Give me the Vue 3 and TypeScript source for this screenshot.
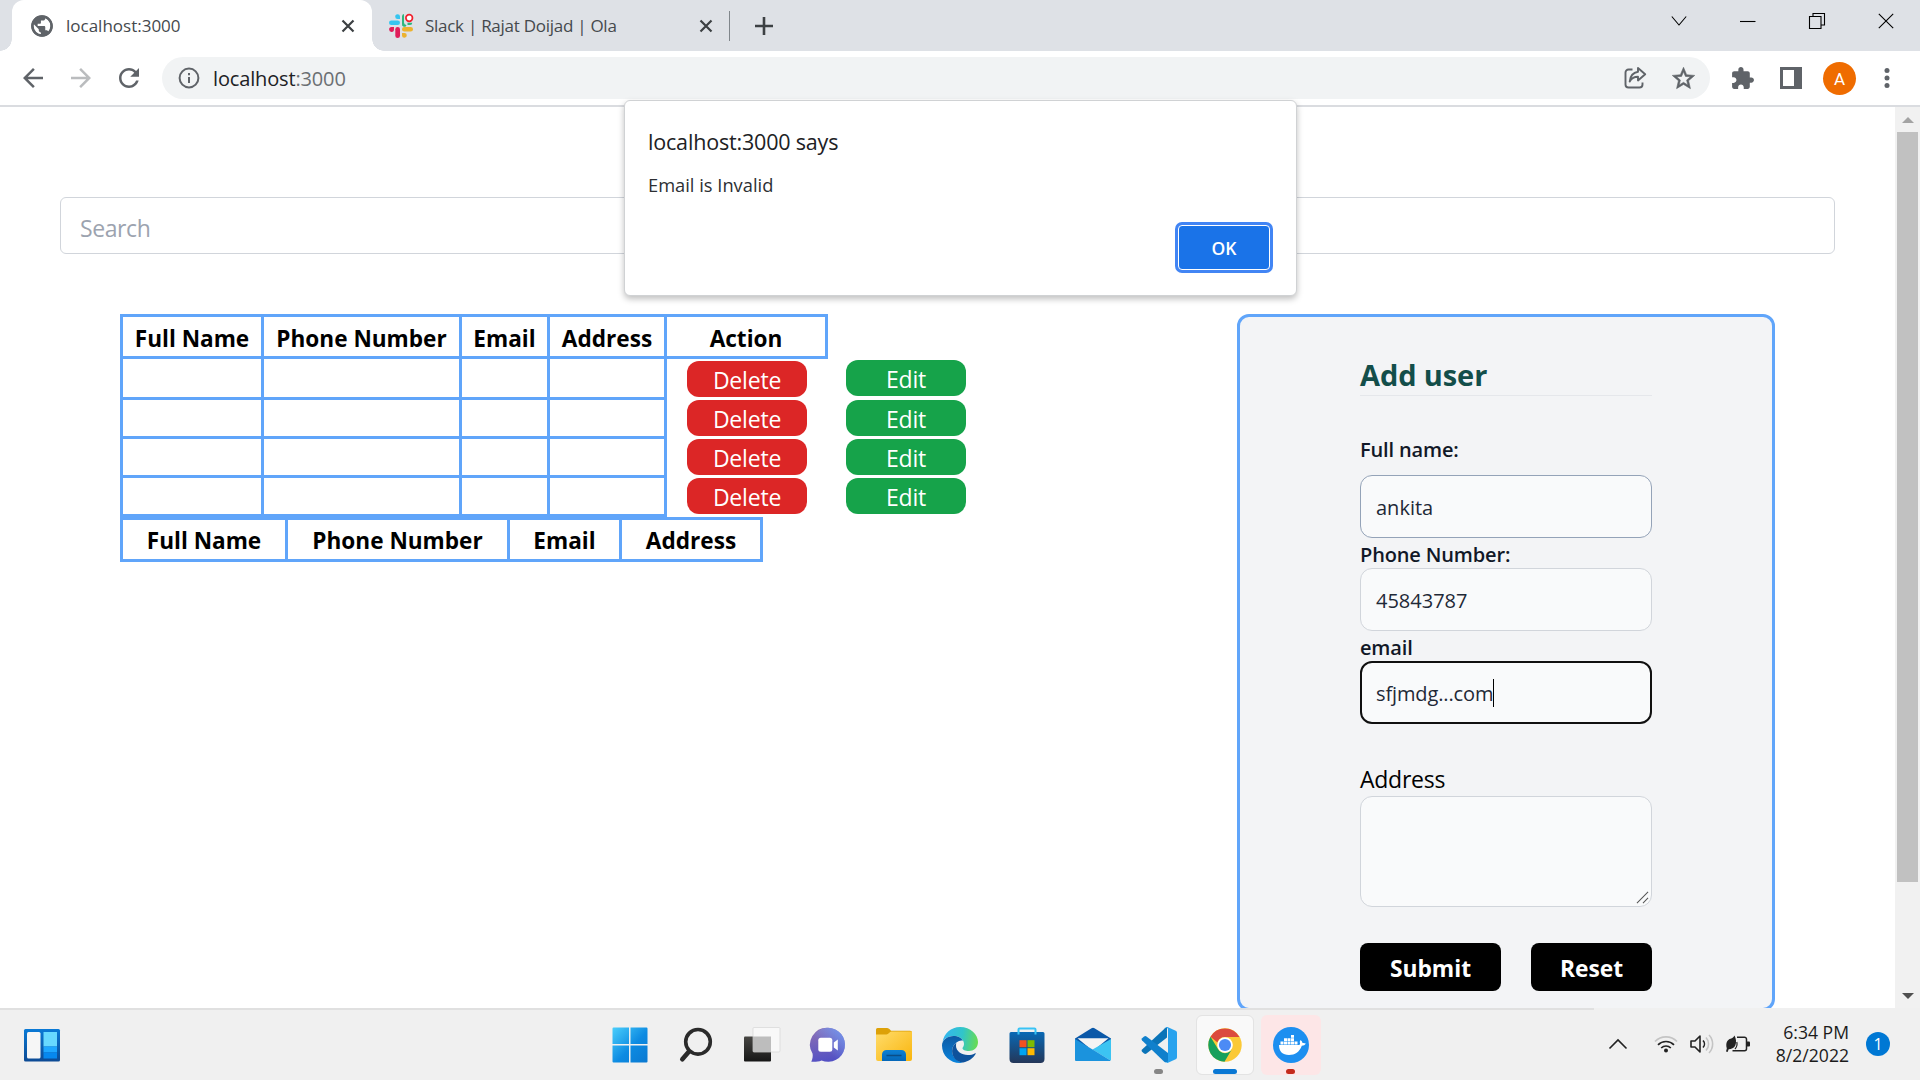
<script setup lang="ts">
interface Column {
  label: string
  width: number
}

const userColumns: Column[] = [
  { label: 'Full Name', width: 144 },
  { label: 'Phone Number', width: 198 },
  { label: 'Email', width: 88 },
  { label: 'Address', width: 117 },
  { label: 'Action', width: 161 },
]

const resultColumns: Column[] = [
  { label: 'Full Name', width: 168 },
  { label: 'Phone Number', width: 222 },
  { label: 'Email', width: 112 },
  { label: 'Address', width: 141 },
]

const users: number[] = [1, 2, 3, 4]
</script>

<template>
  <div class="screen">
    <header class="tabs">
      <div class="tab active">
        <svg class="globe" viewBox="0 0 24 24"><circle cx="12" cy="12" r="8.800" fill="none" stroke="#5f6368" stroke-width="2.200"/><path fill="#5f6368" d="M12 2C6.480 2 2 6.480 2 12s4.480 10 10 10 10-4.480 10-10S17.520 2 12 2zm-1 17.930c-3.950-.490-7-3.850-7-7.930 0-.620.080-1.210.210-1.790L9 15v1c0 1.100.900 2 2 2v1.930zm6.900-2.540c-.260-.810-1-1.390-1.900-1.390h-1v-3c0-.550-.450-1-1-1H8v-2h2c.550 0 1-.450 1-1V7h2c1.100 0 2-.900 2-2v-.410c2.930 1.190 5 4.060 5 7.410 0 2.080-.800 3.970-2.100 5.390z"/></svg>
        <span class="tab-title t1">localhost:3000</span>
        <svg class="x" viewBox="0 0 14 14"><path d="M1.500 1.500l11 11M12.500 1.500l-11 11" stroke="#3c4043" stroke-width="2.200"/></svg>
      </div>
      <div class="tab second">
        <svg class="slack" viewBox="0 0 24 24">
          <g fill="#36c5f0"><path d="M11 5H8.800A2.400 2.400 0 1 1 11 2.600z"/><rect x="0" y="6.500" width="11" height="4.600" rx="2.300"/></g>
          <path d="M13 2.500A2.400 2.400 0 0 1 15 0v8.500a2.400 2.400 0 0 0 2.500 2.400 2.300 2.300 0 0 1-4.500-1z" fill="#2eb67d"/>
          <path d="M18.500 8.800h4.800a2.300 2.300 0 0 1-2.300 2.300h-2.500z" fill="#2eb67d"/>
          <g fill="#ecb22e"><rect x="13" y="13" width="11" height="4.600" rx="2.300"/><path d="M13 19h2.300a2.400 2.400 0 1 1-2.300 2.400z"/></g>
          <g fill="#e01e5a"><rect x="6.300" y="13" width="4.700" height="11" rx="2.350"/><path d="M5 13v2.300A2.450 2.450 0 1 1 2.500 13z"/></g>
          <circle cx="20.200" cy="4" r="3.300" fill="#fff" stroke="#f0202d" stroke-width="1.700"/>
        </svg>
        <span class="tab-title t2">Slack | Rajat Doijad | Ola</span>
        <svg class="x" viewBox="0 0 14 14"><path d="M1.500 1.500l11 11M12.500 1.500l-11 11" stroke="#3c4043" stroke-width="2.200"/></svg>
      </div>
      <i class="divider"></i>
      <svg class="plus" viewBox="0 0 20 20"><path d="M10 1v18M1 10h18" stroke="#3c4043" stroke-width="2.600"/></svg>
      <div class="window-buttons">
        <svg viewBox="0 0 16 16"><path d="M.8 3.500L8 12l7.200-8.500"/></svg>
        <svg viewBox="0 0 16 16"><path d="M0 8.500h15.500"/></svg>
        <svg viewBox="0 0 16 16"><path d="M.5 3.500h11.500v12H.5zM4 3.500V.5h11.500v11.500h-3.500"/></svg>
        <svg viewBox="0 0 16 16"><path d="M.8.800l14.400 14.400M15.200.800L.8 15.200"/></svg>
      </div>
    </header>

    <nav class="toolbar">
      <svg class="nav-icon back" viewBox="0 0 24 24"><path d="M20 11H7.830l5.590-5.590L12 4l-8 8 8 8 1.410-1.410L7.830 13H20v-2z"/></svg>
      <svg class="nav-icon forward" viewBox="0 0 24 24"><path d="M12 4l-1.410 1.410L16.170 11H4v2h12.170l-5.580 5.590L12 20l8-8z"/></svg>
      <svg class="nav-icon reload" viewBox="0 0 24 24"><path d="M17.650 6.350C16.200 4.900 14.210 4 12 4c-4.420 0-7.990 3.580-7.990 8s3.570 8 7.990 8c3.730 0 6.840-2.550 7.730-6h-2.080c-.820 2.330-3.040 4-5.650 4-3.310 0-6-2.690-6-6s2.690-6 6-6c1.660 0 3.140.690 4.220 1.780L13 11h7V4l-2.350 2.350z"/></svg>
      <div class="omnibox">
        <svg class="info" viewBox="0 0 22 22"><circle cx="11" cy="11" r="9.400" fill="none" stroke="#5f6368" stroke-width="2"/><path d="M11 10v6M11 6v2.200" stroke="#5f6368" stroke-width="2"/></svg>
        <span class="url">localhost<em>:3000</em></span>
        <svg class="share" viewBox="0 0 24 24" fill="none" stroke="#5f6368" stroke-width="1.900" stroke-linejoin="round"><path d="M9.500 3.500H5.500A3 3 0 0 0 2.500 6.500v12a3 3 0 0 0 3 3h11a3 3 0 0 0 3-3v-2"/><path d="M15 2l7.200 6.300L15 14.500v-3.700c-4 0-6.500 1.500-8.300 4.700.500-5 3-9 8.300-9.800z"/></svg>
        <svg class="star" viewBox="0 0 24 24"><path fill="#5f6368" stroke="#5f6368" stroke-width=".5" d="M22 9.240l-7.190-.620L12 2 9.190 8.630 2 9.240l5.460 4.730L5.820 21 12 17.270 18.180 21l-1.630-7.030L22 9.240zM12 15.400l-3.760 2.270 1-4.280-3.320-2.880 4.380-.380L12 6.100l1.710 4.040 4.380.380-3.320 2.880 1 4.280L12 15.400z"/></svg>
      </div>
      <svg class="puzzle" viewBox="0 0 24 24"><path fill="#5f6368" d="M20.500 11H19V7c0-1.100-.900-2-2-2h-4V3.500C13 2.120 11.880 1 10.500 1S8 2.120 8 3.500V5H4c-1.100 0-1.990.900-1.990 2v3.800H3.500c1.490 0 2.700 1.210 2.700 2.700s-1.210 2.700-2.700 2.700H2V20c0 1.100.900 2 2 2h3.800v-1.500c0-1.490 1.210-2.700 2.700-2.700 1.490 0 2.700 1.210 2.700 2.700V22H17c1.100 0 2-.900 2-2v-4h1.500c1.380 0 2.500-1.120 2.500-2.500S21.880 11 20.500 11z"/></svg>
      <svg class="panel-icon" viewBox="0 0 22 22"><path fill="#5f6368" fill-rule="evenodd" d="M0 0h22v22H0zM3 3v16h11V3z"/></svg>
      <span class="avatar">A</span>
      <svg class="dots" viewBox="0 0 6 22" fill="#5f6368"><circle cx="3" cy="3.500" r="2.500"/><circle cx="3" cy="11" r="2.500"/><circle cx="3" cy="18.500" r="2.500"/></svg>
    </nav>

    <section class="viewport">
      <main class="page">
        <div class="search">Search</div>
        <div class="content">
          <div class="tables">
            <div class="row head users">
              <div v-for="c in userColumns" :key="c.label" class="cell" :style="{ width: c.width + 'px' }">{{ c.label }}</div>
            </div>
            <div v-for="u in users" :key="u" class="row body">
              <div v-for="c in userColumns.slice(0, 4)" :key="c.label" class="cell" :style="{ width: c.width + 'px' }"></div>
              <button class="pill delete">Delete</button>
              <button class="pill edit">Edit</button>
            </div>
            <div class="row head">
              <div v-for="c in resultColumns" :key="c.label" class="cell" :style="{ width: c.width + 'px' }">{{ c.label }}</div>
            </div>
          </div>

          <form class="form" @submit.prevent>
            <h2>Add user</h2>
            <label class="first">Full name:</label>
            <div class="field filled"><span>ankita</span></div>
            <label>Phone Number:</label>
            <div class="field"><span>45843787</span></div>
            <label>email</label>
            <div class="field focus"><span class="email-text">sfjmdg...com</span><i class="caret"></i></div>
            <div class="address">Address</div>
            <div class="area">
              <svg viewBox="0 0 14 14"><path d="M1 13L13 1M7.500 13L13 7.500" stroke="#555" stroke-width="1.100"/></svg>
            </div>
            <div class="actions">
              <button class="submit">Submit</button>
              <button class="reset">Reset</button>
            </div>
          </form>
        </div>
      </main>
      <aside class="scrollbar">
        <i class="up"></i>
        <i class="thumb"></i>
        <i class="down"></i>
      </aside>
    </section>

    <footer class="taskbar">
      <svg class="widgets" viewBox="0 0 36 33">
        <defs><linearGradient id="wg" x1="0" y1="0" x2="0" y2="1"><stop offset="0" stop-color="#0a7ad6"/><stop offset="1" stop-color="#0d4a94"/></linearGradient></defs>
        <rect width="36" height="32.500" rx="1.500" fill="url(#wg)"/>
        <rect x="3" y="3" width="13.500" height="26.500" rx="1.500" fill="#f6f6f6"/>
        <path d="M19.500 3H33v14.500H19.500z" fill="#68d9ff"/><path d="M19.500 17.500H33v6H19.500z" fill="#1ea7ff"/><path d="M19.500 23.500H33v6H19.500z" fill="#0688ef"/>
      </svg>

      <div class="apps">
        <div class="app">
          <svg viewBox="0 0 36 36">
            <defs><linearGradient id="win" gradientUnits="userSpaceOnUse" x1="0" y1="0" x2="36" y2="36"><stop offset="0" stop-color="#4cd0fc"/><stop offset=".55" stop-color="#0d8be2"/><stop offset="1" stop-color="#0a78d0"/></linearGradient></defs>
            <path fill="url(#win)" d="M.5 1.500a1 1 0 0 1 1-1H17v16.500H.5zM18.500.500h16a1 1 0 0 1 1 1V17h-17zM.500 18.500H17v17H1.500a1 1 0 0 1-1-1zM18.500 18.500h17v16a1 1 0 0 1-1 1h-16z"/>
          </svg>
        </div>
        <div class="app">
          <svg viewBox="0 0 36 36"><circle cx="20" cy="14.800" r="12.300" fill="none" stroke="#2b2b2b" stroke-width="3.600"/><path d="M11 24.500L4.300 32.300" stroke="#2b2b2b" stroke-width="4.600" stroke-linecap="round"/></svg>
        </div>
        <div class="app">
          <svg viewBox="0 0 36 36">
            <defs><linearGradient id="tv" x1="0" y1="0" x2="0" y2="1"><stop offset="0" stop-color="#474643"/><stop offset="1" stop-color="#171717"/></linearGradient></defs>
            <rect y="9.500" width="27" height="25" rx="1" fill="url(#tv)"/><rect x="9" y=".5" width="27" height="24.500" rx="1" fill="#f8f8f8" stroke="#d6d6d6" stroke-width=".7"/><path d="M9 9.500h18V25H9z" fill="#bdbdbd"/>
          </svg>
        </div>
        <div class="app">
          <svg viewBox="0 0 36 36">
            <defs><linearGradient id="ch" x1=".3" y1="0" x2=".5" y2="1"><stop offset="0" stop-color="#8c6fb4"/><stop offset="1" stop-color="#5250c4"/></linearGradient><linearGradient id="ch2" x1="1" y1="0" x2=".4" y2=".6"><stop offset="0" stop-color="#6f9bf5"/><stop offset="1" stop-color="#6f9bf5" stop-opacity="0"/></linearGradient></defs>
            <path fill="url(#ch)" d="M18 .8a17 17 0 1 1-6.500 32.700c-3 1.300-6.500 1.500-10.200 1.300 1.200-2.500 1.700-5.300 1.300-8A17 17 0 0 1 18 .8z"/>
            <path fill="url(#ch2)" d="M18 .8a17 17 0 1 1-6.500 32.700A17 17 0 0 1 18 .8z"/>
            <rect x="8.300" y="10.800" width="14" height="14" rx="2.500" fill="#fff"/><path fill="#fff" d="M23.800 15.500l4-3v11l-4-3z"/>
          </svg>
        </div>
        <div class="app">
          <svg viewBox="0 0 36 36">
            <defs><linearGradient id="fo" x1="0" y1="0" x2="1" y2="1"><stop offset="0" stop-color="#ffdc6b"/><stop offset="1" stop-color="#f9b50d"/></linearGradient><linearGradient id="fb" x1="0" y1="0" x2="0" y2="1"><stop offset="0" stop-color="#0d80d4"/><stop offset="1" stop-color="#0567b8"/></linearGradient></defs>
            <path d="M0 2.500A1.500 1.500 0 0 1 1.500 1H11c1.500 0 2.500 1 4 2.800h19A2 2 0 0 1 36 6v6H0z" fill="#dda108"/><path d="M0 7.500h10.500c2 0 3-3 5-3H36V32a2 2 0 0 1-2 2H2a2 2 0 0 1-2-2z" fill="url(#fo)"/>
            <path d="M6 34V27.500a4.500 4.500 0 0 1 4.500-4.500h15a4.500 4.500 0 0 1 4.500 4.500V34z" fill="url(#fb)"/><path d="M10.500 28.500h15" stroke="#0b4d86" stroke-width="1.500"/>
          </svg>
        </div>
        <div class="app">
          <svg viewBox="0 0 36 36">
            <defs><linearGradient id="e1" x1="0" y1=".4" x2="1" y2=".5"><stop offset="0" stop-color="#34b5f0"/><stop offset=".55" stop-color="#31c5c9"/><stop offset="1" stop-color="#68dc52"/></linearGradient><linearGradient id="e2" x1="0" y1="0" x2="0" y2="1"><stop offset="0" stop-color="#0c59a4"/><stop offset="1" stop-color="#0a84dc"/></linearGradient></defs>
            <path fill="url(#e1)" d="M.5 15C2 6.500 9 0 18 0c10.500 0 18 7.500 18 15 0 6-4.500 9-9 9-4 0-6.500-1.200-6.500-2.800 0-1 1.500-1.600 1.500-4.200 0-4.500-4.500-8-10.500-8C6.500 9 2.500 11.500.5 15z"/>
            <path fill="url(#e2)" d="M11.500 9C5.500 9 0 13 0 18.500 0 28.500 8 36 18 36c1 0 2-.2 3-.4-6-1.100-10.800-5.600-10.800-11.600 0-5 3.300-8.200 6.800-10 1.500-.6 3-.7 4 0C19.500 10.500 16 9 11.500 9z"/>
            <path fill="#0e529c" d="M14.300 15.800c-2.500 2-4.200 4.700-4.200 8.200 0 6.500 5 11.500 11 11.500 5.500-1 10-4.300 12.500-8.500.5-.8-.2-1-.9-.6-2 1-4 1.600-7 1.600-6 0-11.700-4-11.700-9 0-1.200.1-2.200.3-3.200z"/>
          </svg>
        </div>
        <div class="app">
          <svg viewBox="0 0 36 36">
            <defs><linearGradient id="st" x1="0" y1="0" x2="0" y2="1"><stop offset="0" stop-color="#0969b5"/><stop offset="1" stop-color="#243759"/></linearGradient></defs>
            <path d="M.5 6.500a1.500 1.500 0 0 1 1.500-1.500h32a1.500 1.500 0 0 1 1.500 1.500V32a4 4 0 0 1-4 4h-27a4 4 0 0 1-4-4z" fill="url(#st)"/><path d="M9.500 7.500v-5a1 1 0 0 1 1-1h15a1 1 0 0 1 1 1v5" fill="none" stroke="#38c3f5" stroke-width="2"/>
            <path fill="#f25022" d="M10.500 13.200h7v7h-7z"/><path fill="#7fba00" d="M18.500 13.200h7v7h-7z"/><path fill="#00a4ef" d="M10.500 21.200h7v7h-7z"/><path fill="#ffb900" d="M18.500 21.200h7v7h-7z"/>
          </svg>
        </div>
        <div class="app">
          <svg viewBox="0 0 36 36">
            <path fill="#0a58a8" d="M0 11.500L16.500 1.200a3 3 0 0 1 3 0L36 11.500V20H0z"/><path fill="#f4f4f4" d="M2.500 11.200h31L18 24z"/><path fill="#3cc4f2" d="M36 12v20.500a1 1 0 0 1-.5 1L17.500 22.500z"/><path fill="#1b93dd" d="M0 12l18 10.800L35.500 33.500 35 34H1a1 1 0 0 1-1-1z"/>
          </svg>
        </div>
        <div class="app">
          <svg viewBox="0 0 36 36">
            <path fill="#0b74b8" d="M26 0v10.500L5.500 26.500a2 2 0 0 1-2.400 0l-2-1.700a1.600 1.600 0 0 1 0-2.300L24 1.200z"/><path fill="#1080cc" d="M27 35V26L5.500 9.500a2 2 0 0 0-2.400 0l-2 1.700a1.600 1.600 0 0 0 0 2.300L23.500 34.900z"/><path fill="#29a3ee" d="M26.500 0L34.700 3.800A2 2 0 0 1 36 5.700v24.600a2 2 0 0 1-1.300 1.900L26.500 36c-1.200.3-2.300 0-3-.8 1.300.8 3.500.3 3.500-1.700v-31c0-2-2-2.500-3.500-1.700.7-.8 1.800-1.100 3-.8z"/>
          </svg>
          <i class="mark gray"></i>
        </div>
        <div class="app tile white">
          <svg viewBox="0 0 36 36">
            <circle cx="18" cy="18" r="16.700" fill="#fbc936"/>
            <path fill="#db4a3e" d="M3.500 9.700A16.700 16.700 0 0 1 32.500 10H18a8 8 0 0 0-7.500 5.500z"/><path fill="#17a05d" d="M3.500 9.700A16.700 16.700 0 0 0 17.500 34.700L25 22a8 8 0 0 1-14 0z"/>
            <circle cx="18" cy="18" r="7.800" fill="#fff"/><circle cx="18" cy="18" r="6.100" fill="#4c8bf5"/>
          </svg>
          <i class="mark blue"></i>
        </div>
        <div class="app tile pink">
          <svg viewBox="0 0 36 36">
            <circle cx="18" cy="18" r="18" fill="#1d8ff0"/>
            <path fill="#fff" d="M6 18h20c1.200 0 1.300-1.500.7-3l.8-2c1.200.8 1.800 1.800 2 3 1.300-.2 2.400 0 3.300.6-.8 1.500-2.200 2.200-4 2.200C26.500 25 22 28 16 28 9.500 28 6 24.500 6 18z"/>
            <path fill="#fff" d="M7.500 14.500h3v3h-3zM11 14.500h3v3h-3zM14.500 14.500h3v3h-3zM18 14.500h3v3h-3zM21.500 14.500h3v3h-3zM11 11.200h3v2.900h-3zM14.500 11.200h3v2.900h-3zM18 11.200h3v2.900h-3zM18 8h3v2.800h-3z"/>
          </svg>
          <i class="mark red"></i>
        </div>
      </div>

      <div class="tray">
        <svg class="chev" viewBox="0 0 20 12"><path d="M1.500 10.500L10 2l8.500 8.500" fill="none" stroke="#222" stroke-width="1.600"/></svg>
        <svg class="wifi" viewBox="0 0 24 18" fill="none" stroke-width="1.700"><path d="M1 6.500a15.500 15.500 0 0 1 22 0" stroke="#c4c4c4"/><path d="M4 9.800a11.300 11.300 0 0 1 16 0M7.200 13a6.800 6.800 0 0 1 9.600 0" stroke="#222"/><circle cx="12" cy="15.500" r="2" fill="#222"/></svg>
        <svg class="sound" viewBox="0 0 24 20" fill="none" stroke-width="1.600"><path d="M1 7h4l5-5v16l-5-5H1z" stroke="#222" stroke-linejoin="round"/><path d="M13 6.500a5 5 0 0 1 0 7" stroke="#222"/><path d="M16 3.500a9.500 9.500 0 0 1 0 13M19 1a13 13 0 0 1 0 18" stroke="#c4c4c4"/></svg>
        <svg class="battery" viewBox="0 0 24 18"><path d="M11 2.200h7.500a2 2 0 0 1 2 2v9.600a2 2 0 0 1-2 2H6.500" fill="none" stroke="#222" stroke-width="1.500"/><path d="M21 6.500h2a1 1 0 0 1 1 1v3a1 1 0 0 1-1 1h-2z" fill="#222"/><path d="M8.500.5c1.600 3 2.200 7 .8 10-1.200 2.700-4 3.500-6.600 3.700L1.600 17 0 16.500l.8-3C-.8 7 2 4.500 4.500 3.800 6.500 3.200 7.800 2 8.500.5z" fill="#222"/><path d="M10.800 7c.6 2.500 0 5-1.800 7" fill="none" stroke="#222" stroke-width="1.200"/></svg>
        <div class="clock"><span>6:34 PM</span><span>8/2/2022</span></div>
        <span class="badge">1</span>
      </div>
    </footer>

    <div class="dialog">
      <p class="origin">localhost:3000 says</p>
      <p class="message">Email is Invalid</p>
      <button class="ok">OK</button>
    </div>
  </div>
</template>

<style>
body {
  margin: 0;
  overflow: hidden;
}
</style>

<style scoped>
.screen {
  position: relative;
  width: 1920px;
  height: 1080px;
  display: flex;
  flex-direction: column;
  overflow: hidden;
  background: #fff;
  color: #000;
  font-family: "Segoe UI", "Open Sans", "Noto Sans", sans-serif;
}
.screen *,
.screen *::before,
.screen *::after {
  box-sizing: border-box;
}
svg {
  display: block;
  flex: none;
  overflow: visible;
}
button {
  border: 0;
  padding: 0;
  font-family: inherit;
}

/* tab strip */
.tabs {
  height: 51px;
  flex: none;
  display: flex;
  align-items: center;
  background: #dee1e6;
  padding: 0 26px 0 12px;
}
.tab {
  position: relative;
  height: 51px;
  width: 360px;
  display: flex;
  align-items: center;
  padding: 0 17px;
}
.tab.second {
  width: 358px;
}
.tab.active {
  background: #fff;
  border-radius: 12px 12px 0 0;
}
.tab.active::before,
.tab.active::after {
  content: "";
  position: absolute;
  bottom: 0;
  width: 12px;
  height: 12px;
}
.tab.active::before {
  left: -12px;
  background: radial-gradient(circle at 0 0, transparent 11.5px, #fff 12px);
}
.tab.active::after {
  right: -12px;
  background: radial-gradient(circle at 100% 0, transparent 11.5px, #fff 12px);
}
.globe {
  width: 26px;
  height: 26px;
}
.slack {
  width: 24px;
  height: 24px;
}
.tab-title {
  margin-left: 11px;
  font-size: 17px;
  line-height: 26px;
  color: #45494d;
  flex: 1;
  white-space: nowrap;
}
.t2 {
  margin-left: 12px;
  letter-spacing: -0.27px;
}
.x {
  width: 14px;
  height: 14px;
}
.divider {
  width: 1px;
  height: 30px;
  background: #80868b;
  margin-left: -1px;
}
.plus {
  width: 20px;
  height: 20px;
  margin-left: 24px;
}
.window-buttons {
  margin-left: auto;
  display: flex;
  gap: 53px;
  margin-top: -9px;
}
.window-buttons svg {
  width: 16px;
  height: 16px;
  fill: none;
  stroke: #000;
  stroke-width: 1.1;
}

/* toolbar */
.toolbar {
  height: 56px;
  flex: none;
  display: flex;
  align-items: center;
  border-bottom: 2px solid #dadce0;
  padding-left: 18px;
}
.nav-icon {
  width: 30px;
  height: 30px;
  fill: #5f6368;
}
.forward {
  margin-left: 18px;
  fill: #babcbe;
}
.reload {
  margin-left: 18px;
}
.omnibox {
  width: 1548px;
  height: 42px;
  margin-left: 18px;
  border-radius: 21px;
  background: #f1f3f4;
  display: flex;
  align-items: center;
  padding: 0 13px 0 16px;
}
.info {
  width: 22px;
  height: 22px;
}
.url {
  flex: 1;
  margin: 2px 0 0 13px;
  font-size: 20px;
  line-height: 28px;
  letter-spacing: -0.15px;
  color: #202124;
}
.url em {
  font-style: normal;
  color: #6b6f73;
}
.share {
  width: 24px;
  height: 24px;
}
.star {
  width: 27px;
  height: 27px;
  margin-left: 23px;
}
.puzzle {
  width: 25px;
  height: 25px;
  margin-left: 20px;
}
.panel-icon {
  width: 22px;
  height: 22px;
  margin-left: 25px;
}
.avatar {
  width: 33px;
  height: 33px;
  margin-left: 21px;
  border-radius: 50%;
  background: #ef6c00;
  color: #fff;
  font: 17px/34px Roboto, sans-serif;
  text-align: center;
}
.dots {
  width: 6px;
  height: 22px;
  margin-left: 28px;
}

/* page */
.viewport {
  height: 901px;
  flex: none;
  display: flex;
  overflow: hidden;
}
.page {
  width: 1895px;
  padding: 90px 60px 0;
}
.search {
  height: 57px;
  border: 1px solid #d1d5db;
  border-radius: 6px;
  padding: 3px 19px 0;
  font-size: 23px;
  line-height: 55px;
  letter-spacing: -0.4px;
  color: #9ca3af;
}
.content {
  margin: 60px 0 0;
  padding: 0 60px;
  display: flex;
  justify-content: space-between;
  align-items: flex-start;
}
.tables {
  display: flex;
  flex-direction: column;
}
.row {
  display: flex;
  height: 39px;
}
.cell {
  flex: none;
  border: solid #60a5fa;
  border-width: 0 3px 3px 0;
}
.cell:first-child {
  border-left-width: 3px;
}
.head {
  height: 45px;
}
.head .cell {
  border-top-width: 3px;
  font-size: 22.6px;
  font-weight: 700;
  line-height: 41px;
  text-align: center;
  white-space: nowrap;
}
.head.users .cell {
  line-height: 43px;
}
.head + .body {
  height: 41px;
}
.pill {
  width: 120px;
  height: 36px;
  border-radius: 12px;
  align-self: flex-end;
  margin-bottom: 3px;
  color: #fff;
  font-size: 23px;
  letter-spacing: -0.2px;
  line-height: 38px;
}
.delete {
  background: #dc2626;
  margin-left: 20px;
}
.edit {
  background: #16a34a;
  margin-left: 39px;
}
.head + .body .edit {
  margin-bottom: 4px;
}

/* form */
.form {
  width: 538px;
  height: 697px;
  border: 3px solid #60a5fa;
  border-radius: 12px;
  background: #f3f4f6;
  padding: 37px 120px 0;
  display: flex;
  flex-direction: column;
}
.form h2 {
  margin: 0 0 38px;
  height: 42px;
  border-bottom: 1px solid #e5e7eb;
  font-size: 29px;
  line-height: 41px;
  letter-spacing: -0.1px;
  color: #134e4a;
}
.form label {
  height: 30px;
  padding-top: 2px;
  line-height: 29px;
  font-size: 20px;
  letter-spacing: -0.15px;
  font-weight: 600;
  color: #111827;
}
.form label.first {
  margin-bottom: 11px;
  line-height: 28px;
}
.field {
  height: 63px;
  border: 1px solid #d1d5db;
  border-radius: 12px;
  background: #f9fafb;
  padding: 0 15px;
  display: flex;
  align-items: center;
  font-size: 20px;
  line-height: 30px;
  color: #1f2937;
}
.field.filled {
  border-color: #94a3b8;
}
.field.focus {
  border: 2px solid #101010;
  padding: 0 14px;
}
.field span {
  margin-top: 3px;
}
.email-text {
  letter-spacing: -0.12px;
}
.caret {
  width: 1px;
  height: 28px;
  background: #000;
}
.address {
  margin-top: 37px;
  height: 35px;
  padding-top: 1px;
  line-height: 35px;
  font-size: 23px;
  letter-spacing: -0.25px;
}
.area {
  height: 111px;
  border: 1px solid #d1d5db;
  border-radius: 12px;
  background: #f9fafb;
  display: flex;
  justify-content: flex-end;
  align-items: flex-end;
  padding: 2px;
}
.area svg {
  width: 13px;
  height: 13px;
}
.actions {
  margin-top: 36px;
  display: flex;
  justify-content: space-between;
}
.actions button {
  height: 48px;
  border-radius: 8px;
  background: #000;
  color: #fff;
  font-size: 22.8px;
  font-weight: 700;
  line-height: 52px;
}
.submit {
  width: 141px;
}
.reset {
  width: 121px;
}

/* scrollbar */
.scrollbar {
  width: 25px;
  background: #f1f1f1;
  display: flex;
  flex-direction: column;
  align-items: center;
}
.up {
  margin-top: 10px;
  border: 6px solid transparent;
  border-top: 0;
  border-bottom-color: #a3a3a3;
}
.thumb {
  margin-top: 9px;
  width: 21px;
  height: 750px;
  background: #c1c1c1;
}
.down {
  margin-top: 111px;
  border: 6px solid transparent;
  border-bottom: 0;
  border-top-color: #505050;
}

/* taskbar */
.taskbar {
  flex: 1;
  display: flex;
  align-items: center;
  background: linear-gradient(#e0e0e0, #e0e0e0) 0 0 / 1594px 2px no-repeat, #f0f0f0;
  padding-left: 24px;
}
.widgets {
  width: 36px;
  height: 33px;
  margin-top: 2px;
}
.apps {
  display: flex;
  margin-left: 540px;
  gap: 6.1px;
}
.app {
  position: relative;
  width: 60px;
  height: 60px;
  margin-top: 2px;
  border-radius: 6px;
  display: flex;
  justify-content: center;
  align-items: center;
}
.app svg {
  width: 36px;
  height: 36px;
}
.white {
  width: 58px;
  margin: 2px 1px 0;
  background: #f9f9f9 padding-box;
  border: 1px solid #e3e3e3;
}
.pink {
  background: #fde6e7;
}
.mark {
  position: absolute;
  bottom: 1px;
  width: 9px;
  height: 5px;
  border-radius: 3px;
}
.gray {
  background: #868686;
}
.blue {
  width: 24px;
  bottom: 0;
  background: #0a78d4;
}
.red {
  background: #c42b1c;
}
.tray {
  flex: 1;
  display: flex;
  align-items: center;
  padding: 0 30px 0 287px;
}
.chev {
  width: 20px;
  height: 12px;
}
.wifi {
  width: 24px;
  height: 18px;
  margin-left: 26px;
}
.sound {
  width: 24px;
  height: 20px;
  margin-left: 12px;
}
.battery {
  width: 24px;
  height: 18px;
  margin-left: 12px;
}
.clock {
  margin-left: auto;
  display: flex;
  flex-direction: column;
  align-items: flex-end;
  font-size: 17.6px;
  line-height: 23px;
  color: #1b1b1b;
}
.badge {
  width: 24px;
  height: 24px;
  margin-left: 17px;
  border-radius: 50%;
  background: #0078d4;
  color: #fff;
  font-size: 16px;
  line-height: 24px;
  text-align: center;
}

/* alert */
.dialog {
  position: absolute;
  left: 624px;
  top: 100px;
  width: 673px;
  height: 196px;
  border: 1px solid #d0d2d4;
  border-radius: 6px;
  background: #fff;
  box-shadow: 0 3px 6px rgba(0, 0, 0, 0.25);
  padding: 25px 26px 0 23px;
  display: flex;
  flex-direction: column;
}
.dialog p {
  margin: 0;
  color: #202124;
}
.origin {
  font-size: 21.5px;
  line-height: 32px;
  letter-spacing: -0.18px;
}
.dialog .message {
  margin-top: 13px;
  font-size: 18.3px;
  line-height: 28px;
  color: #2c2f33;
}
.ok {
  align-self: flex-end;
  margin: 26px 0 0;
  width: 92px;
  height: 45px;
  border: 1px solid #fff;
  border-radius: 4px;
  background: #1a73e8;
  box-shadow: 0 0 0 3px #4285f4;
  color: #fff;
  font-size: 17.5px;
  font-weight: 600;
}
</style>
